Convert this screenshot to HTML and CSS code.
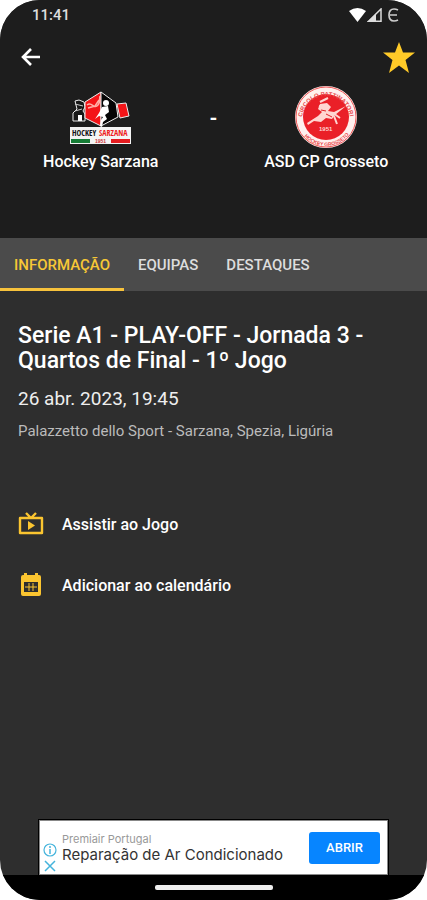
FILE: index.html
```html
<!DOCTYPE html>
<html lang="pt">
<head>
    <meta charset="utf-8">
    <meta name="viewport" content="width=device-width, initial-scale=1">
    <title>Hockey Sarzana - ASD CP Grosseto</title>
    <link rel="stylesheet" href="styles.css">
</head>
<body>
    <div class="phone">
        <header class="header">
            <div class="status-bar">
                <span>11:41</span>
                <div class="status-icons">
                    <svg width="17" height="14" viewBox="0 0 17 14"><path d="M0 3Q8.500-3 17 3L8.500 14z" fill="#fff"/></svg>
                    <svg width="15" height="14" viewBox="0 0 15 14"><path d="M1.500 13.200L14 1v12.200z" fill="none" stroke="#ddd" stroke-width="1.500"/><path d="M1 13.500L9 6v7.500z" fill="#ddd"/></svg>
                    <svg class="carrier" width="11" height="14" viewBox="0 0 11 14"><path d="M10 2Q8 1 6 1C3 1 1 3 1 7s2 6 5 6q2 0 4-1M2 7h7" fill="none" stroke="#ccc" stroke-width="1.700"/></svg>
                </div>
            </div>
            <div class="toolbar">
                <button class="icon-button" aria-label="Voltar">
                    <svg width="22" height="20" viewBox="0 0 22 20"><path d="M20 10H3M11 2l-8 8 8 8" fill="none" stroke="#fff" stroke-width="2.600"/></svg>
                </button>
                <button class="icon-button" aria-label="Favorito">
                    <svg width="32" height="31" viewBox="0 0 32 31"><path d="M16 0l4 10.500h12l-9.500 7.500L26 31l-10-7.500L6 31l3.500-13L0 10.500h12z" fill="#ffca28"/></svg>
                </button>
            </div>
            <div class="match">
                <div class="team">
                    <svg width="62" height="62" viewBox="0 -4 62 62">
                        <g stroke="#eee" stroke-width="1">
                            <path d="M5 11l4-1 5 2 1 5-2 4 2 3v7H3v-8l4-4z" fill="#171717"/>
                            <path d="M15 12L31 2v34l-16-8z" fill="#f41418"/>
                            <path d="M31 2l15 11 2 14-17 9z" fill="#050505"/>
                            <path d="M47 14l9-1 3 13-9 2z" fill="#f41418"/>
                        </g>
                        <path d="M5 14l8 2M5 21l7-2" stroke="#ccc" fill="none"/>
                        <path d="M8 25h4v6H8z" fill="#fff"/>
                        <path d="M17 15c5-4 6 4 10 1s2-7 3-10M18 18l7-2 4-6" stroke="#ffb0a8" stroke-width="1.500" fill="none"/>
                        <circle cx="36" cy="13" r="3" fill="#fff"/>
                        <path d="M32 17l6-1 1 6-4 3 2 4-4 3-1 5-2-1 1-6 2-3-4-1-4 3 4-6z" fill="#fff"/>
                        <path d="M0 37h61v17H0z" fill="#f4f4f4"/>
                        <text class="crest-name" x="2" y="46">HOCKEY</text>
                        <text class="crest-name crest-name-red" x="29" y="46">SARZANA</text>
                        <path d="M1 49h19v4H1z" fill="#167c35"/>
                        <path d="M41 49h19v4H41z" fill="#e51c20"/>
                        <text class="crest-year" x="25" y="53">1951</text>
                    </svg>
                    <span>Hockey Sarzana</span>
                </div>
                <span class="score">-</span>
                <div class="team">
                    <svg width="62" height="62" viewBox="0 0 62 62">
                        <defs>
                            <path id="arc-top" d="M7 34a24 24 0 1 1 48 0"/>
                            <path id="arc-bottom" d="M2 31a29 29 0 0 0 58 0"/>
                        </defs>
                        <circle cx="31" cy="31" r="31" fill="#fff0ee"/>
                        <circle cx="31" cy="31" r="30" fill="none" stroke="#ef5555"/>
                        <circle cx="31" cy="31" r="23" fill="#ea2028"/>
                        <text class="ring-text"><textPath href="#arc-top" startOffset="3">CIRCOLO PATTINATORI</textPath></text>
                        <text class="ring-text ring-text-small"><textPath href="#arc-bottom" startOffset="21">HOCKEY GROSSETO</textPath></text>
                        <path d="M12 37l11-7 4-4-4-3 2-5 7-1 4 4-3 4 6 1 12-6-11 9-3 4-6-1-5 4-7-1-6 4z" fill="#ffd6d1"/>
                        <path d="M24 20l9 3M28 27l5 3M38 27l7 5M39 30l3 8M25 16l8-4" stroke="#ffd6d1" stroke-width="2"/>
                        <path d="M26 24l5 1M31 28l6 3" stroke="#e0252a"/>
                        <text class="ring-year" x="24" y="45">1951</text>
                    </svg>
                    <span>ASD CP Grosseto</span>
                </div>
            </div>
        </header>

        <nav class="tabs">
            <a href="#info" class="tab active">INFORMAÇÃO</a>
            <a href="#equipas" class="tab">EQUIPAS</a>
            <a href="#destaques" class="tab">DESTAQUES</a>
        </nav>

        <main class="content" id="info">
            <h1>Serie A1 - PLAY-OFF - Jornada 3 - Quartos de Final - 1º Jogo</h1>
            <p class="date">26 abr. 2023, 19:45</p>
            <p class="venue">Palazzetto dello Sport - Sarzana, Spezia, Ligúria</p>

            <div class="actions">
                <button class="action">
                    <svg width="26" height="26" viewBox="0 0 26 26"><path d="M2 7h22v15H2zM8 2l5 5 5-5" fill="none" stroke="#fbc530" stroke-width="2.400" stroke-linejoin="round"/><path d="M10 10v9l7-4.500z" fill="#fbc530"/></svg>
                    <span>Assistir ao Jogo</span>
                </button>
                <button class="action">
                    <svg width="26" height="26" viewBox="0 0 26 26"><path d="M5 3h1V1h3v2h8V1h3v2h1q2 0 2 2v17q0 2-2 2H5q-2 0-2-2V5q0-2 2-2z" fill="#fbc530"/><path d="M6 10h14v10H6z" fill="#2e2e2e"/><path d="M7 15h12M11 11v8M15 11v8" fill="none" stroke="#fbc530"/></svg>
                    <span>Adicionar ao calendário</span>
                </button>
            </div>
        </main>

        <aside class="ad">
            <div class="ad-icons">
                <svg width="14" height="14" viewBox="0 0 14 14"><circle cx="7" cy="7" r="6" fill="none" stroke="#45b4dc" stroke-width="1.200"/><path d="M7 6v5M7 3v2" stroke="#45b4dc" stroke-width="1.500"/></svg>
                <svg width="14" height="14" viewBox="0 0 14 14"><path d="M2 2l10 10M12 2L2 12" stroke="#45b4dc" stroke-width="1.500"/></svg>
            </div>
            <div class="ad-text">
                <span class="ad-brand">Premiair Portugal</span>
                <span class="ad-title">Reparação de Ar Condicionado</span>
            </div>
            <button class="ad-button">ABRIR</button>
        </aside>
        <footer class="nav-bar"><div class="handle"></div></footer>
    </div>
</body>
</html>
```
FILE: styles.css
```css
* {
    box-sizing: border-box;
}
body {
    margin: 0;
    background: #fff;
    color: #fff;
    font-family: Roboto, "Liberation Sans", sans-serif;
}
button {
    border: 0;
    padding: 0;
    background: none;
    color: inherit;
    font: inherit;
}
svg {
    display: block;
    flex: none;
}
.phone {
    display: flex;
    flex-direction: column;
    min-height: 100vh;
    background: #2e2e2e;
    border-radius: 40px;
    overflow: hidden;
}
.header {
    background: #1d1d1d;
    padding-bottom: 64px;
}
.status-bar {
    display: flex;
    justify-content: space-between;
    align-items: center;
    height: 30px;
    padding: 0 28px 0 32px;
    font-size: 15px;
    font-weight: 500;
    color: #ddd;
}
.status-icons {
    display: flex;
    gap: 1px;
}
.carrier {
    margin-left: 5px;
}
.toolbar {
    display: flex;
    justify-content: space-between;
    align-items: center;
    height: 54px;
    padding: 0 12px 0 20px;
}
.match {
    display: grid;
    grid-template-columns: 1fr 24px 1fr;
    padding-top: 2px;
}
.team {
    display: flex;
    flex-direction: column;
    align-items: center;
    gap: 2px;
    font-size: 16px;
    line-height: 24px;
    font-weight: 500;
}
.score {
    padding-top: 20px;
    text-align: center;
    font-size: 20px;
    line-height: 24px;
    font-weight: 700;
}
.crest-name {
    font: 700 8px "Liberation Sans Narrow", "Open Sans Condensed", "Roboto Condensed", sans-serif;
    fill: #111;
}
.crest-name-red {
    fill: #ef1c20;
}
.crest-year {
    font: 700 5px "Liberation Sans", sans-serif;
    fill: #c33;
}
.ring-text {
    font: 700 6px "Liberation Sans", sans-serif;
    fill: #e9484a;
}
.ring-text-small {
    font-size: 5px;
}
.ring-year {
    font: 700 6px "Liberation Sans", sans-serif;
    fill: #ffd6d1;
}
.tabs {
    display: flex;
    height: 53px;
    background: #4b4b4b;
}
.tab {
    padding: 0 14px;
    line-height: 54px;
    font-size: 15px;
    font-weight: 500;
    color: #ddd;
    text-decoration: none;
}
.tab.active {
    color: #f7c836;
    border-bottom: 3px solid #f7c23c;
}
.content {
    flex: 1;
    padding: 32px 18px;
}
h1 {
    margin: 0;
    font-size: 23px;
    line-height: 25px;
    font-weight: 500;
}
.date {
    margin: 14px 0 0;
    font-size: 19px;
    line-height: 24px;
    color: #eee;
}
.venue {
    margin: 10px 0 0;
    font-size: 15px;
    line-height: 20px;
    color: #bbb;
}
.actions {
    display: flex;
    flex-direction: column;
    gap: 35px;
    margin-top: 70px;
}
.action {
    display: flex;
    align-items: center;
    gap: 18px;
    font-size: 16px;
    font-weight: 500;
}
.ad {
    display: flex;
    align-items: center;
    height: 55px;
    margin: 0 39px;
    padding: 0 7px 0 3px;
    background: #fff;
    border: 1px solid #888;
    outline: 1px solid #000;
}
.ad-icons {
    display: flex;
    flex-direction: column;
    gap: 2px;
    margin-top: 20px;
}
.ad-text {
    display: flex;
    flex: 1;
    flex-direction: column;
    padding-left: 5px;
    white-space: nowrap;
    font-family: Inter, sans-serif;
}
.ad-brand {
    font-size: 11px;
    line-height: 14px;
    color: #999;
}
.ad-title {
    font-size: 15px;
    line-height: 18px;
    color: #333;
}
.ad-button {
    width: 71px;
    height: 32px;
    border-radius: 3px;
    background: #0785ff;
    font-size: 13px;
    font-weight: 500;
}
.nav-bar {
    display: flex;
    justify-content: center;
    height: 25px;
    padding-top: 10px;
    background: #000;
    z-index: 1;
}
.handle {
    width: 118px;
    height: 5px;
    border-radius: 2px;
    background: #eee;
}
```
